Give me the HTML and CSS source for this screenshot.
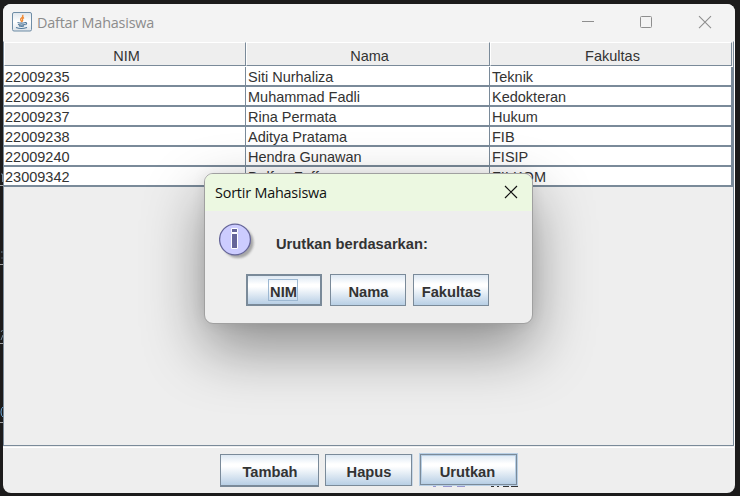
FILE: index.html
```html
<!DOCTYPE html>
<html lang="id">
<head>
<meta charset="utf-8">
<title>Daftar Mahasiswa</title>
<link rel="stylesheet" href="styles.css">
</head>
<body>
<div class="desktop">
  <svg class="behind" width="3" height="260" viewBox="0 0 3 260" aria-hidden="true">
    <path d="M0 15.500H3M0 94.500H3M0 173.500H3M0 252.500H3" stroke="#a5a5a5"/>
    <path d="M1 4h1.500v8M1 82h1.500M1.500 88h1M2.500 160l-1.500 2M3 165l-2 5" stroke="#71879a" fill="none"/>
    <path d="M3 237q-2 1-2 5t2 5" stroke="#6aa6d8" fill="none"/>
  </svg>
  <main class="window">
    <header class="titlebar">
      <svg class="java" width="20" height="20" viewBox="0 0 20 20">
        <defs><linearGradient id="tile" x2="0" y2="1"><stop offset="0" stop-color="#dfe6ec"/><stop offset=".5" stop-color="#fff"/><stop offset="1" stop-color="#dce3e9"/></linearGradient></defs>
        <rect x=".5" y=".5" width="19" height="18.500" rx="1.500" fill="url(#tile)" stroke="#6f8da6"/>
        <path d="M10.500 3q1 1.500-1 3t.500 4M12 5.500q-2 1-1.500 2t-.500 2" fill="none" stroke="#ef8b38" stroke-width="1.400"/>
        <path d="M5.500 10.500q4 1.300 8 0M6 12.500q3.500 1 7 0M7 14q3 .8 5 0M13 10.500q3 0 .5 2.500M4 15.500q5 2 11 0" fill="none" stroke="#52799b" stroke-width="1.200"/>
      </svg>
      <h1 class="title">Daftar Mahasiswa</h1>
      <svg class="controls" width="130" height="14" viewBox="0 0 130 14" fill="none" stroke="#8e8e8e">
        <path d="M0 6.500H12"/><rect x="58.500" y="1.500" width="11" height="11" rx="1"/><path d="M117 1.200l12 12M129 1.200l-12 12" stroke-width="1.100"/>
      </svg>
    </header>
    <section class="scroll">
      <div class="thead"><span>NIM</span><span>Nama</span><span>Fakultas</span></div>
      <div class="row"><span>22009235</span><span>Siti Nurhaliza</span><span>Teknik</span></div>
      <div class="row"><span>22009236</span><span>Muhammad Fadli</span><span>Kedokteran</span></div>
      <div class="row"><span>22009237</span><span>Rina Permata</span><span>Hukum</span></div>
      <div class="row"><span>22009238</span><span>Aditya Pratama</span><span>FIB</span></div>
      <div class="row"><span>22009240</span><span>Hendra Gunawan</span><span>FISIP</span></div>
      <div class="row"><span>23009342</span><span>Dolfan Zaffa</span><span>FILKOM</span></div>
    </section>
    <footer class="actions">
      <button class="btn tambah">Tambah</button>
      <button class="btn hapus">Hapus</button>
      <button class="btn urutkan">Urutkan</button>
      <svg class="residue" width="86" height="1" viewBox="0 0 86 1"><path d="M0 .5H3M10 .5H19M24 .5H32" stroke="#9696ce"/><path d="M58 .5H61M64 .5H66M70 .5H76M78 .5H85" stroke="#333"/></svg>
    </footer>
  </main>
  <section class="dialog">
    <header class="dialog-title"><h2>Sortir Mahasiswa</h2>
      <svg width="14" height="14" viewBox="0 0 14 14"><path d="M1 1l12 12M13 1L1 13" stroke="#111" stroke-width="1.200"/></svg>
    </header>
    <div class="message">
      <svg class="info" width="38" height="38" viewBox="0 0 38 38">
        <defs><filter id="soft"><feGaussianBlur stdDeviation="1.300"/></filter></defs>
        <circle cx="19" cy="19.500" r="15.500" fill="#888" opacity=".7" filter="url(#soft)"/>
        <circle cx="16" cy="16.500" r="15.400" fill="#ccccff" stroke="#666699" stroke-width="1.300"/>
        <path d="M12.500 5.500h6v4h-6zM12.500 10.500h6v15h-6z" fill="#666699" stroke="#fff"/>
      </svg>
      <p>Urutkan berdasarkan:</p>
    </div>
    <div class="choices">
      <button class="btn chosen"><span>NIM</span></button>
      <button class="btn">Nama</button>
      <button class="btn last">Fakultas</button>
    </div>
  </section>
</div>
</body>
</html>
```
FILE: styles.css
```css
* { box-sizing: border-box; }
body { margin: 0; }
.desktop {
  position: relative;
  width: 740px;
  height: 496px;
  padding: 4px 5px 3px 3px;
  background: #1c1b1b;
  overflow: hidden;
  font: 14.5px "Liberation Sans", Arial, sans-serif;
  color: #333;
}
.behind { position: absolute; left: 0; top: 170px; }
.window {
  display: flex;
  flex-direction: column;
  width: 732px;
  height: 489px;
  background: #eee;
  border-radius: 8px;
  overflow: hidden;
}
.titlebar {
  display: flex;
  align-items: center;
  height: 37px;
  flex: none;
  padding: 0 23px 0 9px;
  background: #f3f3f3;
}
.java { margin-top: -1px; }
.title {
  margin: 0 0 0 5px;
  font: 400 14.4px "Open Sans", "Noto Sans", sans-serif;
  letter-spacing: -0.2px;
  color: #8c8c8c;
  white-space: nowrap;
}
.controls { margin-left: auto; margin-top: -2px; }
.scroll {
  width: 731px;
  height: 405px;
  flex: none;
  border: 1px solid #7a8a99;
  border-top-color: #f3f3f3;
  box-shadow: 0 1px #eee, 0 2px #fff, 1px 0 #fff;
}
.thead, .row {
  display: grid;
  grid-template-columns: 242px 244px 243px;
}
.thead {
  grid-template-rows: 24px;
  height: 25px;
  background: #eee;
  border-bottom: 1px solid #fff;
}
.thead span {
  padding-left: 3px;
  border: 1px solid #7a8a99;
  border-top-color: #fff;
  border-left-color: #fff;
  line-height: 26px;
  text-align: center;
}
.thead span:last-child { margin-right: 1px; }
.row {
  height: 20px;
  background: #fff;
  border-bottom: 2px solid #7a8a99;
}
.row span {
  padding-left: 1px;
  line-height: 20px;
  height: 18px;
  border-right: 1px solid #7a8a99;
  white-space: nowrap;
}
.row span + span { padding-left: 2px; }
.row span:last-child { border-right-width: 2px; }
.actions {
  position: relative;
  display: flex;
  align-items: flex-start;
  padding: 8px 0 0 217px;
}
.btn {
  display: block;
  width: 76px;
  height: 32px;
  padding: 3px 0 0 1px;
  border: 1px solid #7a8a99;
  border-radius: 0;
  background: linear-gradient(#dde8f3 0%, #fff 30%, #fff 38%, #b8cfe5 100%);
  font: bold 14.7px "Liberation Sans", Arial, sans-serif;
  color: #333;
  text-align: center;
}
.tambah { width: 99px; height: 33px; border-bottom-width: 2px; }
.hapus { width: 87px; margin-left: 6px; box-shadow: 1px 0 #c8d8e8; }
.urutkan {
  width: 97px;
  height: 31px;
  margin: 0 0 0 8px;
  padding: 4px 2px 0 0;
  border-width: 1px;
  box-shadow: inset 0 0 0 1px #b8cfe5, 0 0 0 1px #b8cfe5;
}
.residue { position: absolute; left: 430px; top: 40px; }
.dialog {
  position: absolute;
  left: 204px;
  top: 173px;
  width: 329px;
  height: 151px;
  border: 1px solid #a0a0a0;
  border-radius: 9px;
  background: #eee;
  overflow: hidden;
  box-shadow: 0 25px 60px rgba(0,0,0,.41), 0 0 14px rgba(0,0,0,.08);
}
.dialog-title {
  display: flex;
  justify-content: space-between;
  align-items: center;
  height: 37px;
  padding: 0 14px 2px 10px;
  background: #ecf8e1;
}
.dialog-title h2 {
  margin: 2px 0 0;
  font: 400 14.4px "Open Sans", "Noto Sans", sans-serif;
  letter-spacing: -0.2px;
  color: #111;
}
.message { display: flex; height: 63px; padding: 12px 0 0 14px; }
.message p { margin: 13px 0 0 19px; font-size: 14.7px; font-weight: bold; white-space: nowrap; }
.choices { display: flex; padding-left: 41px; }
.choices .btn + .btn { margin-left: 8px; }
.choices .btn.last { margin-left: 7px; }
.chosen { border-width: 2px; padding: 0; }
.chosen span {
  display: inline-block;
  position: relative;
  left: -1px;
  height: 22px;
  padding: 4px 0 0 1px;
  border: 1px solid #9db8d2;
}
```
